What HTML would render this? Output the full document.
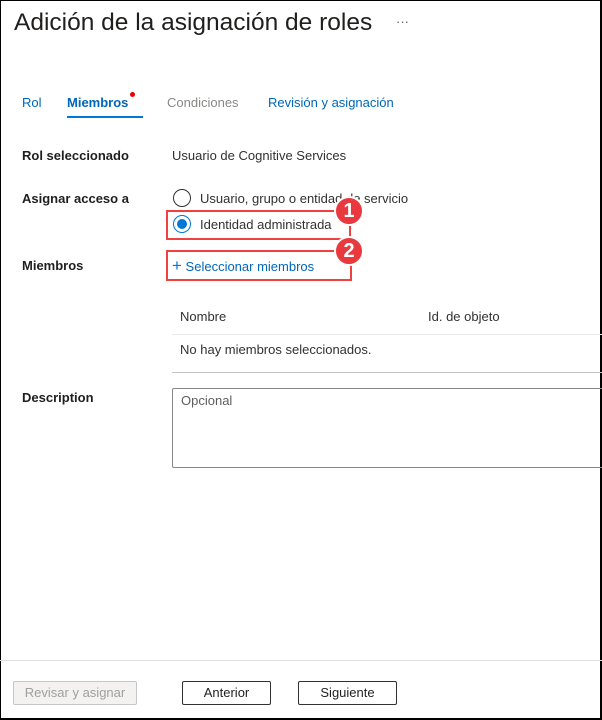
<!DOCTYPE html>
<html><head><meta charset="utf-8"><style>
*{margin:0;padding:0;box-sizing:border-box}
body{width:602px;height:720px;background:#fff;position:relative;overflow:hidden;font-family:"Liberation Sans",sans-serif;color:#323130;font-size:13px}
.a{position:absolute;white-space:nowrap;line-height:16px}
.b{font-weight:bold;color:#201f1e}
.blue{color:#0067b8}
.rb{position:absolute;border:2px solid #f04040}
.badge{position:absolute;width:30px;height:30px;border-radius:50%;background:#e8393f;border:2px solid #fff;color:#fff;font-weight:bold;font-size:20px;text-align:center;line-height:26px}
.btn{position:absolute;top:681px;height:24px;border:1px solid #323130;border-radius:2px;text-align:center;line-height:22px;font-size:13px}
</style></head><body>
<div style="position:absolute;left:0;top:0;width:602px;height:720px;border:1px solid #000;border-right-width:2px;border-bottom-width:2px"></div>
<div class="a" style="left:14px;top:8px;font-size:24.5px;line-height:30px;color:#201f1e">Adición de la asignación de roles</div>
<div class="a" style="left:396px;top:14px;color:#605e5c">···</div>
<div class="a blue" style="left:22px;top:95px">Rol</div>
<div class="a b" style="left:67px;top:95px;color:#0067b8">Miembros</div>
<div style="position:absolute;left:130px;top:92px;width:5px;height:5px;border-radius:50%;background:#e00"></div>
<div style="position:absolute;left:67px;top:116px;width:76px;height:2px;background:#0078d4"></div>
<div class="a" style="left:167px;top:95px;color:#8a8886">Condiciones</div>
<div class="a blue" style="left:268px;top:95px">Revisión y asignación</div>
<div class="a b" style="left:22px;top:148px">Rol seleccionado</div>
<div class="a" style="left:172px;top:148px">Usuario de Cognitive Services</div>
<div class="a b" style="left:22px;top:191px">Asignar acceso a</div>
<div style="position:absolute;left:173px;top:189px;width:18px;height:18px;border:1px solid #323130;border-radius:50%"></div>
<div class="a" style="left:200px;top:191px">Usuario, grupo o entidad de servicio</div>
<div style="position:absolute;left:173px;top:215px;width:18px;height:18px;border:1px solid #0078d4;border-radius:50%"></div>
<div style="position:absolute;left:177px;top:219px;width:10px;height:10px;background:#0078d4;border-radius:50%"></div>
<div class="a" style="left:200px;top:217px">Identidad administrada</div>
<div class="rb" style="left:166px;top:210px;width:185px;height:30px"></div>
<div class="a b" style="left:22px;top:258px">Miembros</div>
<div class="a blue" style="left:172px;top:258px"><span style="font-size:17px;font-weight:normal;color:#0078d4">+</span> Seleccionar miembros</div>
<div class="rb" style="left:166px;top:250px;width:186px;height:31px"></div>
<div class="badge" style="left:334px;top:196px">1</div>
<div class="badge" style="left:334px;top:236px">2</div>
<div class="a" style="left:180px;top:309px">Nombre</div>
<div class="a" style="left:428px;top:309px">Id. de objeto</div>
<div style="position:absolute;left:172px;top:334px;width:430px;height:1px;background:#edebe9"></div>
<div class="a" style="left:180px;top:342px">No hay miembros seleccionados.</div>
<div style="position:absolute;left:172px;top:372px;width:430px;height:1px;background:#c8c6c4"></div>
<div class="a b" style="left:22px;top:390px">Description</div>
<div style="position:absolute;left:172px;top:388px;width:432px;height:80px;border:1px solid #8a8886;border-radius:2px"></div>
<div class="a" style="left:181px;top:393px;color:#605e5c">Opcional</div>
<div style="position:absolute;left:0;top:660px;width:602px;height:1px;background:#e1dfdd"></div>
<div class="btn" style="left:13px;width:124px;border-color:#c8c6c4;background:#f3f2f1;color:#a19f9d">Revisar y asignar</div>
<div class="btn" style="left:182px;width:89px;color:#201f1e">Anterior</div>
<div class="btn" style="left:298px;width:99px;color:#201f1e">Siguiente</div>
</body></html>
